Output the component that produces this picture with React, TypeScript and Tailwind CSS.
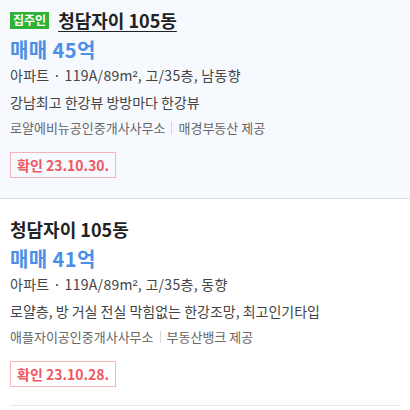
import React from "react";

type Listing = {
  owner?: boolean;
  title: string;
  price: string;
  specStart: string;
  specEnd: string;
  desc: string;
  agent: string;
  provider: string;
  confirmed: string;
  highlight?: boolean;
};

const listings: Listing[] = [
  {
    owner: true,
    title: "청담자이 105동",
    price: "매매 45억",
    specStart: "아파트 · 119A/89m",
    specEnd: ", 고/35층, 남동향",
    desc: "강남최고 한강뷰 방방마다 한강뷰",
    agent: "로얄에비뉴공인중개사사무소",
    provider: "매경부동산 제공",
    confirmed: "23.10.30.",
    highlight: true,
  },
  {
    title: "청담자이 105동",
    price: "매매 41억",
    specStart: "아파트 · 119A/89m",
    specEnd: ", 고/35층, 동향",
    desc: "로얄층, 방 거실 전실 막힘없는 한강조망, 최고인기타입",
    agent: "애플자이공인중개사사무소",
    provider: "부동산뱅크 제공",
    confirmed: "23.10.28.",
  },
];

function ListingBody({ item }: { item: Listing }) {
  return (
    <>
      <div className="flex items-center h-[22px]">
        {item.owner && (
          <span className="mr-[9px] inline-flex items-center justify-center h-[17px] px-[3px] bg-[#2eb135] text-white text-[12px] font-bold leading-none">
            집주인
          </span>
        )}
        <span
          className={
            "text-[18px] font-bold text-[#222] leading-none " +
            (item.owner ? "underline underline-offset-[3px] decoration-1" : "")
          }
        >
          {item.title}
        </span>
      </div>
      <div className="mt-[7px] h-[24px] text-[20px] font-bold text-[#4b8fe6] leading-[24px] tracking-[0.4px]">
        {item.price}
      </div>
      <div className="mt-[3px] h-[20px] text-[14px] text-[#444] leading-[20px] tracking-[0.3px] whitespace-nowrap">
        {item.specStart}
        <span
          className="text-[14px] leading-none"
          style={{ fontFamily: '"Liberation Sans", sans-serif' }}
        >
          ²
        </span>
        {item.specEnd}
      </div>
      <div className="mt-[7px] h-[20px] text-[14px] text-[#444] leading-[20px] whitespace-nowrap">
        {item.desc}
      </div>
      <div className="mt-[7px] h-[18px] flex items-center text-[13px] text-[#666] leading-[18px] whitespace-nowrap">
        <span>{item.agent}</span>
        <span className="mx-[6px] h-[12px] w-px bg-[#d4d6da]" />
        <span>{item.provider}</span>
      </div>
      <div className="mt-[15px] inline-flex items-center h-[26px] px-[6px] border border-[#f6b3b8] text-[14px] font-bold text-[#f0575f] leading-none">
        확인 {item.confirmed}
      </div>
    </>
  );
}

export default function App() {
  return (
    <div
      className="w-[410px] h-[410px] bg-white overflow-hidden"
      style={{ fontFamily: '"Noto Sans CJK KR", "Noto Sans", sans-serif' }}
    >
      <div className="bg-[#f6f9fd] border-b border-[#dcdfe4] px-[10px] pt-[9px] pb-[20px]">
        <ListingBody item={listings[0]} />
      </div>
      <div className="mx-[10px] pt-[19px] pb-[18px] border-b border-[#e6e8ec]">
        <ListingBody item={listings[1]} />
      </div>
    </div>
  );
}
